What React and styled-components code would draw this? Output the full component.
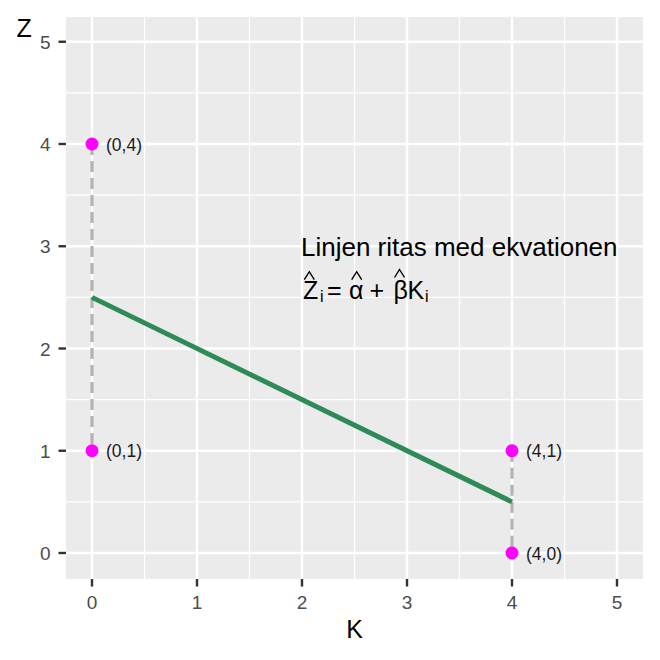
import React from "react";
import styled, { createGlobalStyle } from "styled-components";

const Global = createGlobalStyle`
  html, body { margin: 0; padding: 0; background: #ffffff; }
  body { font-family: "Liberation Sans", Arial, sans-serif; }
`;

const Figure = styled.div`
  width: 660px;
  height: 660px;
  background: #ffffff;
  display: flex;
`;

const Chart = styled.svg`
  display: block;
  width: 660px;
  height: 660px;
  font-family: "Liberation Sans", Arial, sans-serif;
`;

const TickLabel = styled.text`
  font-size: 19px;
  fill: #4d4d4d;
  text-anchor: ${(p) => p.$anchor || "middle"};
`;

const AxisTitle = styled.text`
  font-size: 25px;
  fill: #000000;
  text-anchor: ${(p) => p.$anchor || "middle"};
`;

const PointLabel = styled.text`
  font-size: 17.5px;
  fill: #1a1a1a;
`;

const Annotation = styled.text`
  font-size: ${(p) => p.$size || 25}px;
  fill: #000000;
`;

const X = (v) => 92 + 105 * v;
const Y = (v) => 553 - 102.25 * v;

const PANEL = { x0: 66, x1: 643, y0: 17, y1: 579 };
const majors = [0, 1, 2, 3, 4, 5];
const minors = [0.5, 1.5, 2.5, 3.5, 4.5];

const points = [
  { x: 0, y: 4, label: "(0,4)" },
  { x: 0, y: 1, label: "(0,1)" },
  { x: 4, y: 1, label: "(4,1)" },
  { x: 4, y: 0, label: "(4,0)" },
];

const Hat = ({ cx, y }) => (
  <polyline
    points={`${cx - 5},${y + 8} ${cx},${y} ${cx + 5},${y + 8}`}
    fill="none"
    stroke="#000"
    strokeWidth="1.4"
  />
);

export default function App() {
  return (
    <Figure>
      <Global />
      <Chart viewBox="0 0 660 660">
        <rect x={PANEL.x0} y={PANEL.y0} width={PANEL.x1 - PANEL.x0} height={PANEL.y1 - PANEL.y0} fill="#ebebeb" />
        {minors.map((m) => (
          <g key={"mn" + m}>
            <line x1={X(m)} x2={X(m)} y1={PANEL.y0} y2={PANEL.y1} stroke="#fff" strokeWidth="1.2" />
            <line x1={PANEL.x0} x2={PANEL.x1} y1={Y(m)} y2={Y(m)} stroke="#fff" strokeWidth="1.2" />
          </g>
        ))}
        {majors.map((m) => (
          <g key={"mj" + m}>
            <line x1={X(m)} x2={X(m)} y1={PANEL.y0} y2={PANEL.y1} stroke="#fff" strokeWidth="2.4" />
            <line x1={PANEL.x0} x2={PANEL.x1} y1={Y(m)} y2={Y(m)} stroke="#fff" strokeWidth="2.4" />
          </g>
        ))}

        {/* dashed residual segments */}
        <line x1={X(0)} x2={X(0)} y1={Y(4)} y2={Y(1)} stroke="#b3b3b3" strokeWidth="3.2" strokeDasharray="11 6" />
        <line x1={X(4)} x2={X(4)} y1={Y(1)} y2={Y(0)} stroke="#b3b3b3" strokeWidth="3.2" strokeDasharray="11 6" />

        {/* regression line */}
        <line x1={X(0)} y1={Y(2.5)} x2={X(4)} y2={Y(0.5)} stroke="#2e8b57" strokeWidth="5" />

        {points.map((p) => (
          <g key={p.label}>
            <circle cx={X(p.x)} cy={Y(p.y)} r="6.5" fill="#ff00ff" />
            <PointLabel x={X(p.x) + 14} y={Y(p.y) + 6.5}>{p.label}</PointLabel>
          </g>
        ))}

        {/* annotation */}
        <Annotation $size={26} x="301" y="255.5">Linjen ritas med ekvationen</Annotation>
        <Annotation x="303" y="298.5">Z</Annotation>
        <Annotation $size={16} x="320" y="302">i</Annotation>
        <Annotation y="298.5">
          <tspan x="327">=</tspan>
          <tspan x="349">α</tspan>
          <tspan x="369.5">+</tspan>
          <tspan x="393.5">β</tspan>
        </Annotation>
        <Annotation x="407.5" y="298.5">K</Annotation>
        <Annotation $size={16} x="425" y="302">i</Annotation>
        <Hat cx={309.3} y={271.7} />
        <Hat cx={356.7} y={271.7} />
        <Hat cx={399.5} y={269.5} />

        {/* axes ticks */}
        {majors.map((m) => (
          <g key={"t" + m}>
            <line x1={X(m)} x2={X(m)} y1={PANEL.y1} y2={PANEL.y1 + 7.5} stroke="#333" strokeWidth="2.4" />
            <TickLabel x={X(m)} y="608.5">{m}</TickLabel>
            <line x1={PANEL.x0 - 7.5} x2={PANEL.x0} y1={Y(m)} y2={Y(m)} stroke="#333" strokeWidth="2.4" />
            <TickLabel $anchor="end" x="50.5" y={Y(m) + 7}>{m}</TickLabel>
          </g>
        ))}

        <AxisTitle x={X(2.5)} y="638">K</AxisTitle>
        <AxisTitle $anchor="start" x="16.5" y="36.5">Z</AxisTitle>
      </Chart>
    </Figure>
  );
}
